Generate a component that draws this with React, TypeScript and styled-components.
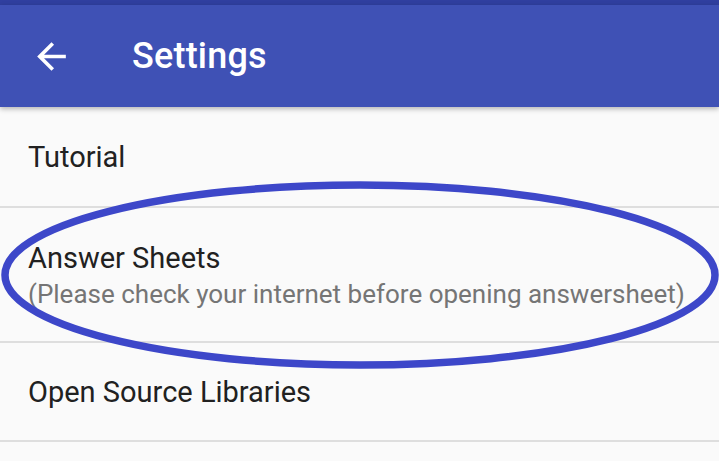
import React from 'react';
import styled, { createGlobalStyle } from 'styled-components';

const GlobalStyle = createGlobalStyle`
    html, body {
        margin: 0;
        padding: 0;
        background: #fafafa;
        font-family: Roboto, "Noto Sans", sans-serif;
    }
`;

const Screen = styled.div`
    position: relative;
    width: 719px;
    height: 461px;
    overflow: hidden;
    background: #fafafa;
`;

const StatusBar = styled.div`
    height: 5px;
    background: #303f9f;
`;

const Toolbar = styled.header`
    position: relative;
    z-index: 1;
    display: flex;
    align-items: center;
    height: 102px;
    background: #3f51b5;
    box-shadow: 0 2px 5px rgba(0, 0, 0, 0.28);
`;

const BackButton = styled.button`
    display: flex;
    align-items: center;
    justify-content: center;
    width: 60px;
    height: 60px;
    margin-left: 21px;
    padding: 0;
    border: none;
    background: transparent;
    cursor: pointer;
`;

const Title = styled.h1`
    margin: 0 0 0 51px;
    color: #ffffff;
    font-size: 36px;
    font-weight: 500;
    letter-spacing: 0.2px;
`;

const List = styled.ul`
    list-style: none;
    margin: 0;
    padding: 0;
`;

const Row = styled.li<{ $height: number }>`
    display: flex;
    flex-direction: column;
    justify-content: center;
    height: ${p => p.$height}px;
    padding: 0 28px;
    border-bottom: 2px solid #dedede;
`;

const RowTitle = styled.span`
    color: #212121;
    font-size: 29px;
    line-height: 38px;
`;

const RowSummary = styled.span`
    color: #757575;
    font-size: 26px;
    line-height: 34px;
    white-space: nowrap;
`;

const Highlight = styled.svg`
    position: absolute;
    left: 0;
    top: 0;
    pointer-events: none;
`;

const ArrowBack = () => (
    <svg width="43" height="43" viewBox="0 0 24 24">
        <path d="M20 11H7.83l5.59-5.59L12 4l-8 8 8 8 1.41-1.41L7.83 13H20v-2z" fill="#ffffff" />
    </svg>
);

export default function App() {
    return (
        <Screen>
            <GlobalStyle />
            <StatusBar />
            <Toolbar>
                <BackButton aria-label="Back">
                    <ArrowBack />
                </BackButton>
                <Title>Settings</Title>
            </Toolbar>
            <List>
                <Row $height={99}>
                    <RowTitle>Tutorial</RowTitle>
                </Row>
                <Row $height={133}>
                    <RowTitle>Answer Sheets</RowTitle>
                    <RowSummary>(Please check your internet before opening answersheet)</RowSummary>
                </Row>
                <Row $height={97}>
                    <RowTitle>Open Source Libraries</RowTitle>
                </Row>
            </List>
            <Highlight width="719" height="461">
                <ellipse cx="360" cy="275" rx="355" ry="90" fill="none" stroke="#3d47c9" strokeWidth="7.5" />
            </Highlight>
        </Screen>
    );
}
